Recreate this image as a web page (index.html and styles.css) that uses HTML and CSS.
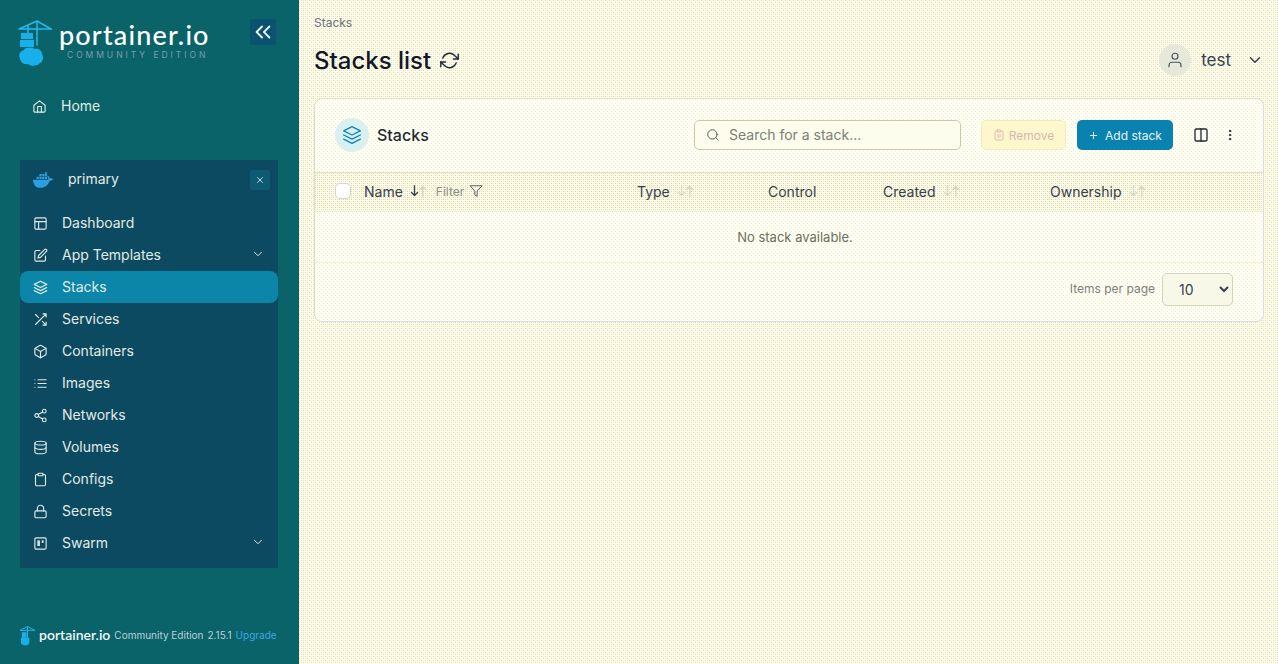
FILE: index.html
```html
<!DOCTYPE html>
<html lang="en">
<head>
<meta charset="utf-8">
<title>Stacks list</title>
<link rel="stylesheet" href="styles.css">
</head>
<body>
<div class="app">
  <aside class="sidebar">
    <div class="brand">
      <svg class="logo" viewBox="0 0 34 48"><path class="logo-line" d="M1 10 19 2l14 8M19 2v24M1 10h33M10 7v8"/><path class="logo-fill" d="M3 14h12v6H3zM2 21h14v7H2z"/><path class="logo-fill" d="M6 31c2-3 8-3 10-1 4-1 8 1 8 5 2 3 1 8-2 9-2 3-9 4-12 1-4 1-8-2-8-6-2-3 0-7 4-8z"/></svg>
      <div class="brand-text">
        <div class="brand-name">portainer.io</div>
        <div class="brand-sub">COMMUNITY EDITION</div>
      </div>
      <button class="collapse"><svg viewBox="0 0 24 24" class="ic-collapse"><path d="m11 18-6-6 6-6M19 18l-6-6 6-6"/></svg></button>
    </div>
    <a class="home"><svg class="ic" viewBox="0 0 24 24"><path d="m3 10 9-7 9 7v9a2 2 0 0 1-2 2H5a2 2 0 0 1-2-2z"/><path d="M9 21v-9h6v9"/></svg><span>Home</span></a>
    <section class="env">
      <div class="env-head">
        <svg class="whale" viewBox="0 0 24 17"><path d="M4 5h2.400v2.400H4zM7 5h2.400v2.400H7zM10 5h2.400v2.400H10zM13 5h2.400v2.400H13zM7 2h2.400v2.400H7zM10 2h2.400v2.400H10zM13 2h2.400v2.400H13zM13 0h2.400v1.600H13z"/><path d="M0 8.200h16.500c.4-1.200 0-2.800-1-3.600l.8-.8c1.300.8 1.900 1.900 2 3 1.300-.4 2.800-.2 3.700.6-.8 1.500-2.300 2-3.900 1.900C16.800 13.500 13.500 17 8 17 2.500 17 .2 13 0 8.200z"/></svg>
        <span class="env-name">primary</span>
        <button class="env-close"><svg viewBox="0 0 24 24"><path d="M6 6l12 12M18 6 6 18"/></svg></button>
      </div>
      <nav class="nav">
        <a class="item"><svg class="ic" viewBox="0 0 24 24"><rect x="3" y="3" width="18" height="18" rx="2"/><path d="M3 9h18M9 21V9"/></svg><span>Dashboard</span></a>
        <a class="item"><svg class="ic" viewBox="0 0 24 24"><path d="M11 4H5a2 2 0 0 0-2 2v13a2 2 0 0 0 2 2h13a2 2 0 0 0 2-2v-6"/><path d="M18.500 2.500a2.100 2.100 0 0 1 3 3L12 15l-4 1 1-4z"/></svg><span>App Templates</span><svg class="chev" viewBox="0 0 24 24"><path d="m6 9 6 6 6-6"/></svg></a>
        <a class="item active"><svg class="ic" viewBox="0 0 24 24"><path d="m12 2 10 5-10 5L2 7z"/><path d="m2 12 10 5 10-5M2 17l10 5 10-5"/></svg><span>Stacks</span></a>
        <a class="item"><svg class="ic" viewBox="0 0 24 24"><path d="M16 3h5v5M4 20 21 3M21 16v5h-5M15 15l6 6M4 4l5 5"/></svg><span>Services</span></a>
        <a class="item"><svg class="ic" viewBox="0 0 24 24"><path d="M21 16V8a2 2 0 0 0-1-1.700l-7-4a2 2 0 0 0-2 0l-7 4A2 2 0 0 0 3 8v8a2 2 0 0 0 1 1.700l7 4a2 2 0 0 0 2 0l7-4a2 2 0 0 0 1-1.700z"/><path d="M3.300 7 12 12l8.700-5M12 22V12"/></svg><span>Containers</span></a>
        <a class="item"><svg class="ic" viewBox="0 0 24 24"><path d="M8 6h13M8 12h13M8 18h13M3 6h.01M3 12h.01M3 18h.01"/></svg><span>Images</span></a>
        <a class="item"><svg class="ic" viewBox="0 0 24 24"><circle cx="18" cy="5" r="3"/><circle cx="6" cy="12" r="3"/><circle cx="18" cy="19" r="3"/><path d="m8.600 13.500 6.800 4M15.400 6.500l-6.800 4"/></svg><span>Networks</span></a>
        <a class="item"><svg class="ic" viewBox="0 0 24 24"><ellipse cx="12" cy="5" rx="9" ry="3"/><path d="M21 12c0 1.700-4 3-9 3s-9-1.300-9-3"/><path d="M3 5v14c0 1.700 4 3 9 3s9-1.300 9-3V5"/></svg><span>Volumes</span></a>
        <a class="item"><svg class="ic" viewBox="0 0 24 24"><path d="M16 4h2a2 2 0 0 1 2 2v14a2 2 0 0 1-2 2H6a2 2 0 0 1-2-2V6a2 2 0 0 1 2-2h2"/><rect x="8" y="2" width="8" height="4" rx="1"/></svg><span>Configs</span></a>
        <a class="item"><svg class="ic" viewBox="0 0 24 24"><rect x="3" y="11" width="18" height="11" rx="2"/><path d="M7 11V7a5 5 0 0 1 10 0v4"/></svg><span>Secrets</span></a>
        <a class="item"><svg class="ic" viewBox="0 0 24 24"><rect x="3" y="3" width="18" height="18" rx="2"/><rect class="ic-solid" x="7" y="7" width="4" height="9"/><rect class="ic-solid" x="14" y="7" width="3" height="4"/></svg><span>Swarm</span><svg class="chev" viewBox="0 0 24 24"><path d="m6 9 6 6 6-6"/></svg></a>
      </nav>
    </section>
    <footer class="side-foot">
      <svg class="logo-small" viewBox="0 0 16 21"><path class="logo-line thin" d="M0 5 8 1l8 4M8 1v12M0 5h16"/><path class="logo-fill" d="M2 7h5v6H2z"/><path class="logo-fill" d="M1 13h9v5c0 2-2 3-4 3s-5-1-5-3z"/></svg>
      <span class="foot-name">portainer.io</span>
      <span class="foot-ed">Community Edition</span>
      <span class="foot-ver">2.15.1</span>
      <a class="foot-up">Upgrade</a>
    </footer>
  </aside>
  <main class="main">
    <header class="top">
      <div class="crumbs">Stacks</div>
      <div class="title-row">
        <h1 class="title">Stacks list</h1>
        <svg class="refresh" viewBox="0 0 24 24"><path d="M23 4v6h-6M1 20v-6h6"/><path d="M3.500 9a9 9 0 0 1 14.900-3.400L23 10M1 14l4.600 4.400A9 9 0 0 0 20.500 15"/></svg>
        <div class="user">
          <span class="avatar"><svg viewBox="0 0 24 24"><path d="M20 21v-2a4 4 0 0 0-4-4H8a4 4 0 0 0-4 4v2"/><circle cx="12" cy="7" r="4"/></svg></span>
          <span class="user-name">test</span>
          <svg class="user-chev" viewBox="0 0 24 24"><path d="m6 9 6 6 6-6"/></svg>
        </div>
      </div>
    </header>
    <section class="card">
      <div class="card-head">
        <span class="badge"><svg viewBox="0 0 24 24"><path d="m12 2 10 5-10 5L2 7z"/><path d="m2 12 10 5 10-5M2 17l10 5 10-5"/></svg></span>
        <h2 class="card-title">Stacks</h2>
        <label class="search"><svg viewBox="0 0 24 24"><circle cx="11" cy="11" r="8"/><path d="m21 21-4.300-4.300"/></svg><span>Search for a stack...</span></label>
        <button class="btn-remove"><svg viewBox="0 0 24 24"><path d="M16 4h2a2 2 0 0 1 2 2v14a2 2 0 0 1-2 2H6a2 2 0 0 1-2-2V6a2 2 0 0 1 2-2h2"/><rect x="8" y="2" width="8" height="4" rx="1"/><path d="M10 11v6M14 11v6"/></svg>Remove</button>
        <button class="btn-add"><svg viewBox="0 0 24 24"><path d="M12 5v14M5 12h14"/></svg>Add stack</button>
        <svg class="tool-col" viewBox="0 0 24 24"><rect x="3" y="3" width="18" height="18" rx="2"/><path d="M12 3v18"/></svg>
        <svg class="tool-dots" viewBox="0 0 24 24"><circle cx="12" cy="5" r="1.500"/><circle cx="12" cy="12" r="1.500"/><circle cx="12" cy="19" r="1.500"/></svg>
      </div>
      <div class="thead">
        <span class="check"></span>
        <div class="th">Name <svg class="sort" viewBox="0 0 24 16"><path class="on" d="M6 1v13M2 10l4 4 4-4"/><path d="M17 15V2M13 6l4-4 4 4"/></svg><span class="filter">Filter</span><svg class="funnel" viewBox="0 0 24 24"><path d="M22 3H2l8 9.500V19l4 2v-8.500z"/></svg></div>
        <div class="th">Type <svg class="sort" viewBox="0 0 24 16"><path d="M6 1v13M2 10l4 4 4-4M17 15V2M13 6l4-4 4 4"/></svg></div>
        <div class="th">Control</div>
        <div class="th">Created <svg class="sort" viewBox="0 0 24 16"><path d="M6 1v13M2 10l4 4 4-4M17 15V2M13 6l4-4 4 4"/></svg></div>
        <div class="th">Ownership <svg class="sort" viewBox="0 0 24 16"><path d="M6 1v13M2 10l4 4 4-4M17 15V2M13 6l4-4 4 4"/></svg></div>
      </div>
      <div class="empty">No stack available.</div>
      <div class="card-foot">
        <span class="per-page">Items per page</span>
        <select class="select"><option>10</option><option>25</option><option>50</option></select>
      </div>
    </section>
  </main>
</div>
</body>
</html>
```
FILE: styles.css
```css
* { box-sizing: border-box; }
html, body { margin: 0; height: 100%; }
body {
  font-family: Inter, "Liberation Sans", sans-serif;
  color: #1f2937;
  overflow: hidden;
}
svg { fill: none; stroke: currentColor; stroke-width: 2; stroke-linecap: round; stroke-linejoin: round; flex: none; display: block; }
button { font: inherit; border: 0; padding: 0; }
.app { display: flex; height: 664px; }

/* light surfaces keep the reference's fine dither */
.main {
  flex: 1;
  min-width: 0;
  padding: 0 14px 0 15px;
  background: #fffef0 url("data:image/svg+xml,%3Csvg xmlns='http://www.w3.org/2000/svg' width='4' height='4' shape-rendering='crispEdges'%3E%3Cpath fill='%23fbf07a' d='M0 0h1v1H0zM2 2h1v1H2z'/%3E%3Cpath fill='%23d4d4ec' d='M2 0h1v1H2zM0 2h1v1H0z'/%3E%3C/svg%3E") 0 0 / 4px 4px;
}
.sidebar {
  width: 299px;
  flex: none;
  display: flex;
  flex-direction: column;
  color: #e2eae6;
  background: #0a6368;
}

/* brand */
.brand { display: flex; align-items: flex-start; height: 88px; padding: 19px 0 0 18px; }
.logo { width: 34px; height: 48px; }
.logo-fill { fill: #18b0ea; stroke: none; }
.logo-line { stroke: #22b8f0; stroke-width: 1.500; }
.logo-line.thin { stroke-width: 1; }
.brand-text { margin-left: 7px; width: 183px; }
.brand-name { font-size: 27px; line-height: 32px; font-weight: 500; color: #fff; font-family: Lato, Inter, sans-serif; letter-spacing: 1.150px; }
.brand-sub { font-size: 8.500px; line-height: 10px; letter-spacing: 2.950px; color: #7f9dae; margin: -1px 0 0 8px; white-space: nowrap; }
.collapse { width: 26px; height: 26px; margin: 0 0 0 8px; background: #0b5270; color: #eef3f0; border-radius: 3px; display: flex; align-items: center; justify-content: center; }
.ic-collapse { width: 22px; height: 22px; }
.home { display: flex; align-items: center; height: 36px; padding-left: 32px; font-size: 14px; margin-bottom: 36px; }
.home span { margin-left: 14px; margin-bottom: 2px; }
.ic { width: 15px; height: 15px; stroke-width: 1.800; }
.ic-solid { fill: currentColor; stroke: none; }

/* environment */
.env { margin: 0 21px 0 20px; height: 408px; background: #0b4a60; }
.env-head { display: flex; align-items: center; height: 47px; padding: 0 8px 8px 13px; }
.whale { width: 22px; height: 16px; fill: #2d9fe0; stroke: none; }
.env-name { margin: 0 0 2px 13px; font-size: 14px; flex: 1; }
.env-close { width: 20px; height: 20px; background: #0d5a72; color: #e6edf0; border-radius: 3px; display: flex; align-items: center; justify-content: center; }
.env-close svg { width: 10px; height: 10px; }
.nav { display: flex; flex-direction: column; }
.item { display: flex; align-items: center; height: 32px; padding: 0 13px 0 13px; font-size: 14px; border-radius: 8px; }
.item span { margin: 0 0 2px 14px; flex: 1; }
.active { background: #0b85a8; }
.chev { width: 14px; height: 14px; margin-bottom: 2px; stroke-width: 1.700; }

/* footer */
.side-foot { margin-top: auto; height: 58px; padding: 0 0 0 20px; display: flex; align-items: center; font-size: 10px; color: #bcd0da; white-space: nowrap; }
.logo-small { width: 15px; height: 21px; }
.foot-name { margin: 0 0 2px 4px; font-size: 14px; font-weight: 600; color: #f2f6f8; font-family: Lato, Inter, sans-serif; }
.foot-ed { margin-left: 4px; }
.foot-ver { margin-left: 4px; }
.foot-up { margin-left: 4px; color: #3ea8e0; }

/* page top */
.top { height: 98px; padding-top: 16px; }
.crumbs { font-size: 12px; line-height: 13px; color: #6b7280; }
.title-row { display: flex; align-items: center; margin-top: 11px; height: 40px; }
.title { margin: 0; font-size: 24px; font-weight: 500; color: #111827; }
.refresh { width: 19px; height: 19px; margin-left: 9px; stroke-width: 1.800; color: #1f2937; }
.user { margin-left: auto; display: flex; align-items: center; }
.avatar { width: 32px; height: 32px; border-radius: 50%; background: #e6e8d8; display: flex; align-items: center; justify-content: center; color: #4b5563; }
.avatar svg { width: 18px; height: 18px; stroke-width: 1.600; }
.user-name { margin-left: 10px; font-size: 17px; color: #344054; }
.user-chev { width: 18px; height: 18px; margin: 0 0 0 15px; color: #344054; }

/* card */
.card {
  height: 224px;
  border: 1px solid #dcdcd8;
  border-radius: 8px;
  overflow: hidden;
  background: #fff url("data:image/svg+xml,%3Csvg xmlns='http://www.w3.org/2000/svg' width='4' height='4' shape-rendering='crispEdges'%3E%3Cpath fill='%23fdf48a' d='M0 0h1v1H0zM2 2h1v1H2z'/%3E%3C/svg%3E") 0 0 / 4px 4px;
}
.card-head { display: flex; align-items: center; height: 73px; padding: 0 24px 1px 20px; }
.badge { width: 34px; height: 34px; border-radius: 50%; background: #d9eff0; color: #0a86bc; display: flex; align-items: center; justify-content: center; }
.badge svg { width: 20px; height: 20px; stroke-width: 1.600; }
.card-title { margin: 0 0 0 8px; font-size: 16px; font-weight: 500; color: #1f2937; width: 317px; }
.search { width: 267px; height: 30px; border: 1px solid #c9c9a8; border-radius: 5px; display: flex; align-items: center; padding-left: 11px; font-size: 14px; color: #7b7f78; background: #fdfdee; }
.search svg { width: 14px; height: 14px; stroke-width: 1.700; color: #555b56; }
.search span { margin: 0 0 2px 9px; }
.btn-remove { margin-left: 20px; width: 85px; height: 30px; border: 1px solid #f7e6c0; border-radius: 5px; background: #fdf7cc; color: #d9b7b0; font-size: 12px; display: flex; align-items: center; justify-content: center; gap: 4px; }
.btn-remove svg { width: 12px; height: 12px; stroke-width: 1.700; }
.btn-add { margin-left: 11px; width: 96px; height: 30px; border-radius: 5px; background: #0a82b0; color: #e8f4f8; font-size: 12px; display: flex; align-items: center; justify-content: center; gap: 6px; }
.btn-add svg { width: 11px; height: 11px; }
.tool-col { width: 16px; height: 16px; margin-left: 20px; color: #1f2937; stroke-width: 2; }
.tool-dots { width: 14px; height: 14px; margin-left: 14px; color: #1f2937; fill: currentColor; stroke-width: 1; }

/* table */
.thead {
  display: grid;
  grid-template-columns: 29px 273px 131px 115px 167px 1fr;
  align-items: center;
  height: 40px;
  padding: 0 0 2px 20px;
  border-top: 1px solid #e3e3d4;
  border-bottom: 1px solid #ecead0;
  font-size: 14px;
  color: #374151;
  background: #fefcec url("data:image/svg+xml,%3Csvg xmlns='http://www.w3.org/2000/svg' width='4' height='4' shape-rendering='crispEdges'%3E%3Cpath fill='%23f4e880' d='M0 0h1v1H0zM2 2h1v1H2z'/%3E%3Cpath fill='%23d0d0d8' d='M2 0h1v1H2zM0 2h1v1H0z'/%3E%3C/svg%3E") 0 0 / 4px 4px;
}
.check { width: 16px; height: 16px; border: 1px solid #d4d4dc; border-radius: 5px; background: #fff; }
.th { display: flex; align-items: center; gap: 7px; }
.sort { width: 18px; height: 12px; color: #d6d6bc; stroke-width: 1.700; }
.sort .on { stroke: #374151; }
.filter { margin-left: 1px; font-size: 12px; color: #8a8f88; }
.funnel { width: 14px; height: 14px; margin-left: -2px; stroke-width: 1.600; color: #4b5563; }
.empty { height: 51px; padding: 0 0 1px 12px; display: flex; align-items: center; justify-content: center; font-size: 13px; color: #6b6f60; border-bottom: 1px solid #f4f3e2; }
.card-foot { display: flex; align-items: center; justify-content: flex-end; height: 58px; padding: 0 30px 5px 0; }
.per-page { font-size: 12px; color: #7b7f78; margin: 0 7px 2px 0; }
.select { width: 71px; height: 33px; border: 1px solid #d4d4b8; border-radius: 5px; padding-left: 12px; font: 14px Inter, sans-serif; color: #374151; background: #f8f8e8; }
```
